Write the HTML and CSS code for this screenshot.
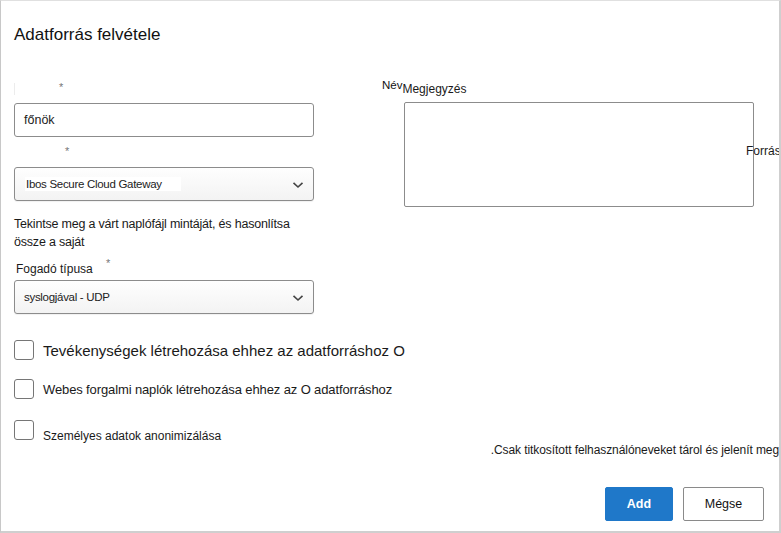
FILE: index.html
```html
<!DOCTYPE html>
<html lang="hu">
<head>
<meta charset="utf-8">
<title>Adatforrás felvétele</title>
<link rel="stylesheet" href="styles.css">
</head>
<body>
<div class="dialog">
  <h1 class="title">Adatforrás felvétele</h1>
  <div class="columns">
    <div class="left">
      <div class="label-row first"><span class="ghost"></span><span class="req req1">*</span></div>
      <div class="field"><span class="value">főnök</span></div>
      <div class="label-row second"><span class="req req2">*</span></div>
      <div class="field select"><span class="value hl">Ibos Secure Cloud Gateway</span><svg class="chev" width="12" height="8" viewBox="0 0 12 8"><path d="M1.5 1.8 L6 6 L10.5 1.8" fill="none" stroke="#444" stroke-width="1.6"/></svg></div>
      <p class="help">Tekintse meg a várt naplófájl mintáját, és hasonlítsa össze a saját</p>
      <div class="label-row third"><span class="lbl">Fogadó típusa</span><span class="req req3">*</span></div>
      <div class="field select"><span class="value v2">syslogjával - UDP</span><svg class="chev" width="12" height="8" viewBox="0 0 12 8"><path d="M1.5 1.8 L6 6 L10.5 1.8" fill="none" stroke="#444" stroke-width="1.6"/></svg></div>
    </div>
    <div class="right">
      <div class="right-labels"><span class="nev">Név</span><span class="megj">Megjegyzés</span></div>
      <div class="textarea"></div>
      <span class="forras">Forrás</span>
    </div>
  </div>
  <div class="checks">
    <label class="check c1"><span class="box"></span><span class="ctext">Tevékenységek létrehozása ehhez az adatforráshoz O</span></label>
    <label class="check c2"><span class="box"></span><span class="ctext">Webes forgalmi naplók létrehozása ehhez az O adatforráshoz</span></label>
    <label class="check c3"><span class="box"></span><span class="ctext">Személyes adatok anonimizálása</span></label>
  </div>
  <p class="note">.Csak titkosított felhasználóneveket tárol és jelenít meg</p>
  <div class="actions">
    <button class="btn primary">Add</button>
    <button class="btn secondary">Mégse</button>
  </div>
</div>
</body>
</html>
```
FILE: styles.css
```css
* { box-sizing: border-box; }
html, body { margin: 0; padding: 0; background: #fff; }
body { font-family: "Liberation Sans", Arial, sans-serif; color: #1a1a1a; }

.dialog {
  position: relative;
  width: 781px;
  height: 533px;
  border-left: 1px solid #c8c8c8;
  border-top: 1px solid #e0e0e0;
  border-right: 2px solid #cfcfcf;
  border-bottom: 2px solid #cfcfcf;
  padding: 0 0 0 13px;
  overflow: hidden;
}

.title {
  margin: 0;
  padding-top: 23px;
  font-size: 17px;
  line-height: 22px;
  font-weight: normal;
  color: #111;
}

.columns { display: flex; margin-top: 35px; }
.left { width: 300px; }

.label-row { position: relative; height: 22px; font-size: 13px; }
.ghost { position: absolute; left: 0; top: 2px; width: 1px; height: 12px; background: #ececec; }
.req { position: absolute; color: #777; font-size: 11px; }
.req1 { left: 45px; top: 0; }
.req2 { left: 51px; top: 0; }
.req3 { left: 92px; top: -5px; }

.field {
  position: relative;
  height: 34px;
  border: 1px solid #8c8c8c;
  border-radius: 3px;
  display: flex;
  align-items: center;
  padding-left: 9px;
  font-size: 12.5px;
  color: #222;
}
.field.select {
  background: linear-gradient(#fefefe, #f3f3f3);
  box-shadow: 0 1px 1px rgba(0,0,0,0.06);
  font-size: 11.5px;
  letter-spacing: -0.3px;
}
.label-row.second { height: 22px; margin-top: 8px; }
.value.hl { background: #fff; padding: 1px 19px 1px 1px; margin-left: 1px; }
.chev { position: absolute; right: 9px; top: 13px; }

.help {
  margin: 14px 0 0 0;
  font-size: 12.5px;
  letter-spacing: -0.2px;
  line-height: 18px;
  color: #1a1a1a;
}
.label-row.third { height: 18px; margin-top: 11px; }
.lbl { position: absolute; left: 2px; top: 0; font-size: 12px; }

.right { position: relative; margin-left: 68px; flex: 1; }
.right-labels { display: flex; align-items: flex-start; height: 23px; margin-top: -2px; font-size: 12px; }
.nev { color: #111; font-size: 11.5px; }
.megj { margin-top: 3px; }
.textarea {
  margin-left: 22px;
  width: 350px;
  height: 105px;
  border: 1px solid #8c8c8c;
  border-radius: 2px;
}
.forras { position: absolute; left: 364px; top: 63px; font-size: 12px; }

.checks { margin-top: 26px; display: flex; flex-direction: column; }
.check { display: flex; align-items: center; height: 20px; }
.box {
  width: 20px; height: 20px;
  border: 1px solid #767676;
  border-radius: 3px;
  flex: none;
}
.ctext { margin-left: 9px; }
.c1 .ctext { font-size: 15px; }
.c2 { margin-top: 19px; }
.c2 .ctext { font-size: 13px; letter-spacing: -0.12px; }
.c3 { margin-top: 21px; }
.c3 .ctext { font-size: 12px; position: relative; top: 6px; }

.note {
  margin: 3px 0 0 0;
  text-align: right;
  font-size: 12px;
  letter-spacing: -0.08px;
}

.actions {
  position: absolute;
  right: 15px;
  bottom: 10px;
  display: flex;
  gap: 10px;
}
.btn {
  height: 34px;
  font-family: "Liberation Sans", Arial, sans-serif;
  font-size: 12.5px;
  border-radius: 2px;
  cursor: pointer;
}
.primary {
  width: 68px;
  background: #1f78c9;
  color: #fff;
  border: 1px solid #1f78c9;
  font-weight: bold;
}
.secondary {
  width: 81px;
  background: #fff;
  color: #111;
  border: 1px solid #8a8a8a;
}
```
